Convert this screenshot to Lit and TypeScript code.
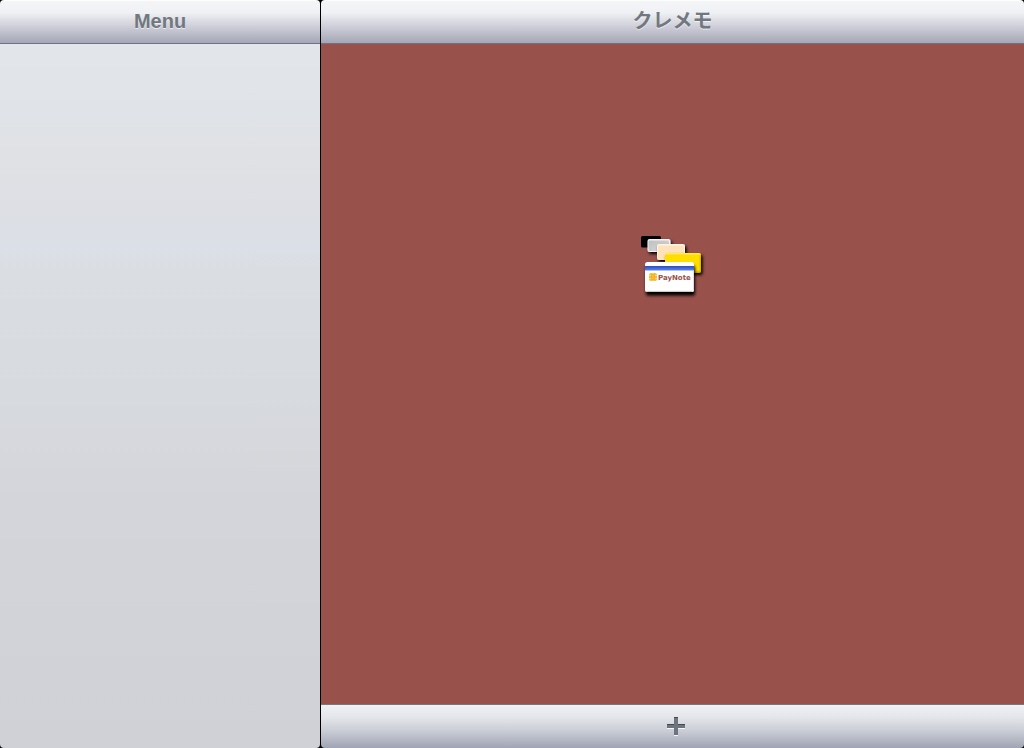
import { LitElement, html, css } from "lit";
import { customElement, property } from "lit/decorators.js";

@customElement("card-logo")
export class CardLogo extends LitElement {
  static styles = css`
    :host {
      display: block;
      width: 74px;
      height: 72px;
    }
    svg {
      display: block;
      overflow: visible;
    }
    .brand {
      font: bold 7px "DejaVu Sans", sans-serif;
      fill: #98504a;
    }
  `;

  render() {
    return html`
      <svg width="72" height="72" viewBox="0 0 72 72" role="img" aria-label="PayNote">
        <defs>
          <filter id="soft" x="-20%" y="-20%" width="150%" height="170%">
            <feDropShadow dx="1.5" dy="2" stdDeviation="1.5" flood-color="#000" flood-opacity="1" />
          </filter>
          <filter id="deep" x="-20%" y="-20%" width="150%" height="170%">
            <feDropShadow dx="1" dy="3.5" stdDeviation="1.6" flood-color="#000" flood-opacity="1" />
          </filter>
          <linearGradient id="silver" x1="0" x2="1" y1="0" y2="1">
            <stop offset="0" stop-color="#c0c0c0" />
            <stop offset="1" stop-color="#d8d8d8" />
          </linearGradient>
          <linearGradient id="gold" x1="0" x2="0" y1="0" y2="1">
            <stop offset="0" stop-color="#fff06a" />
            <stop offset="0.12" stop-color="#ffdd00" />
            <stop offset="0.85" stop-color="#ffe000" />
            <stop offset="1" stop-color="#c99d00" />
          </linearGradient>
          <linearGradient id="stripe" x1="0" x2="0" y1="0" y2="1">
            <stop offset="0" stop-color="#2c4cc0" />
            <stop offset="1" stop-color="#5b84ee" />
          </linearGradient>
        </defs>
        <rect x="5" y="2" width="20" height="11.500" rx="1.500" fill="#000" />
        <g filter="url(#soft)">
          <rect x="11.500" y="5" width="23" height="13" rx="2" fill="#f4f4f4" />
          <rect x="12.500" y="6.500" width="20.500" height="10.500" rx="1" fill="url(#silver)" />
        </g>
        <g filter="url(#soft)">
          <rect x="21" y="10" width="28" height="16" rx="2" fill="#fff4e2" />
          <rect x="22" y="11.500" width="26" height="14.500" rx="1" fill="#ffe2bc" />
        </g>
        <g filter="url(#soft)">
          <rect x="29" y="19" width="36" height="20" rx="2" fill="url(#gold)" />
          <path d="M64.200 21v16.500" stroke="#d6aa00" />
        </g>
        <g filter="url(#deep)">
          <rect x="9" y="28" width="49" height="30" rx="2.500" fill="#fff" />
          <path d="M11 57.400h45" stroke="#c4c4c4" />
          <path d="M57.400 37v19" stroke="#dadada" />
        </g>
        <rect x="9" y="32" width="49" height="4.500" fill="url(#stripe)" />
        <rect x="13" y="39" width="8" height="8" rx="2" fill="#f6bd35" />
        <path d="M13 41.500h2.500M13 44.500h2.500M18.500 41.500h2.500M18.500 44.500h2.500M17 39v1.500M17 45.500v1.500" stroke="#ffe08a" stroke-width="0.8" />
        <rect x="15.500" y="40.500" width="3" height="5" rx="1" fill="none" stroke="#e8a41a" stroke-width="0.6" />
        <text class="brand" x="22" y="46">PayNote</text>
      </svg>
    `;
  }
}

@customElement("title-bar")
export class TitleBar extends LitElement {
  @property() heading = "";

  static styles = css`
    :host {
      display: flex;
      align-items: center;
      justify-content: center;
      box-sizing: border-box;
      height: 44px;
      padding-bottom: 2px;
      border-top: 1px solid #fdfdfd;
      border-bottom: 1px solid #717286;
      background: linear-gradient(#f4f5f7, #f0f1f4 28%, #cccdd7 62%, #a4a7b6);
    }
    h1 {
      margin: 0;
      font: bold 20px/24px "Liberation Sans", "Noto Sans CJK JP", sans-serif;
      color: #717880;
      text-shadow: 0 1px 0 rgba(255, 255, 255, 0.6);
    }
  `;

  render() {
    return html`<h1>${this.heading}</h1>`;
  }
}

@customElement("app-root")
export class AppRoot extends LitElement {
  static styles = css`
    :host {
      display: grid;
      grid-template-columns: 320px 1fr;
      gap: 1px;
      height: 100vh;
      background: #000;
    }
    .pane {
      display: flex;
      flex-direction: column;
      min-width: 0;
      border-radius: 4px;
      overflow: hidden;
    }
    .menu {
      flex: 1;
      background: linear-gradient(#e2e6ea, #dfe1e5 16%, #dddfe4 24%, #dbdfe7 29%, #dadde1 33%, #d7dade 50%, #d4d5da 65%, #d0d1d6);
    }
    .content {
      flex: 1;
      display: flex;
      justify-content: center;
      padding-top: 190px;
      background: #98514b;
    }
    .toolbar {
      display: flex;
      align-items: center;
      justify-content: center;
      box-sizing: border-box;
      height: 44px;
      padding-left: 6px;
      border-top: 1px solid #777980;
      background: linear-gradient(#f0f1f4, #e5e6eb 28%, #c8cbd4 62%, #a0a4b4);
    }
    .add {
      display: grid;
      place-items: center;
      width: 44px;
      height: 40px;
      padding: 0;
      border: 0;
      background: none;
    }
  `;

  render() {
    return html`
      <nav class="pane" aria-label="Menu">
        <title-bar heading="Menu"></title-bar>
        <div class="menu"></div>
      </nav>
      <main class="pane">
        <title-bar heading="クレメモ"></title-bar>
        <div class="content"><card-logo></card-logo></div>
        <footer class="toolbar">
          <button class="add" type="button" aria-label="Add">
            <svg width="18" height="19" viewBox="0 0 18 19">
              <path d="M7 1h4v7h7v4h-7v7H7v-7H0V8h7z" fill="#f5f6f8" />
              <path d="M7 0h4v7h7v4h-7v7H7v-7H0V7h7z" fill="#6c757d" />
              <path d="M7 0h4v1H7zM0 7h7v1H0zM11 7h7v1h-7z" fill="#444a50" />
            </svg>
          </button>
        </footer>
      </main>
    `;
  }
}
